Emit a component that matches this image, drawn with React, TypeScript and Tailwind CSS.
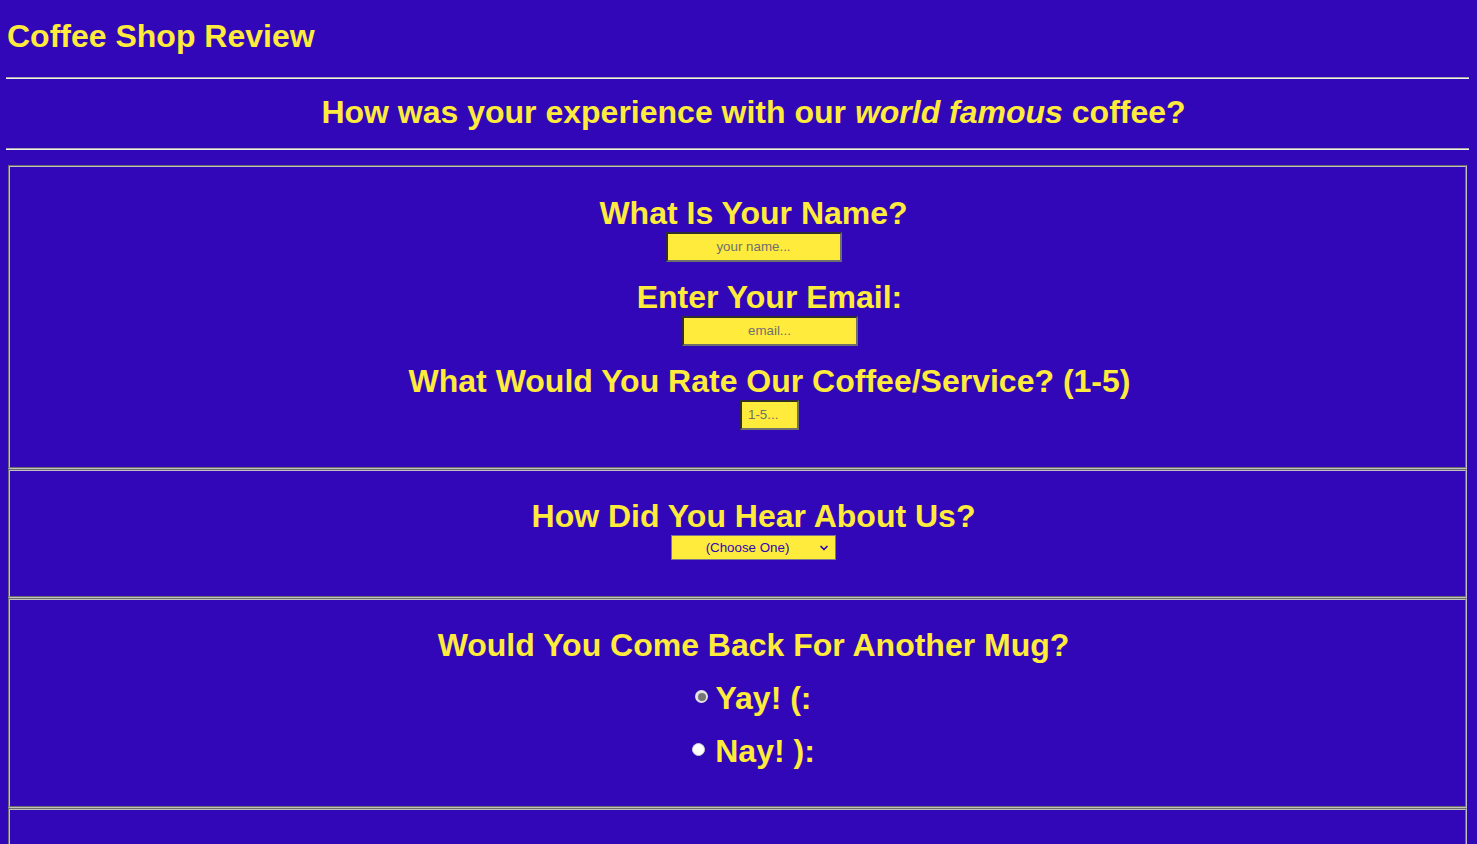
import { ChevronDown } from "lucide-react";

const heading = "text-[32px] leading-[37px] font-bold";
const field =
  "h-[30px] bg-[#ffeb3b] border-2 border-t-[#2e2e2e] border-l-[#2e2e2e] border-b-[#6e6e6e] border-r-[#6e6e6e] text-[13.33px] font-normal text-[#6f6f6f] flex items-center";

function Radio({ checked }: { checked?: boolean }) {
  if (checked) {
    return (
      <span className="w-[13px] h-[13px] rounded-full bg-[#e4e4e4] flex items-center justify-center -translate-y-[2px]">
        <span className="w-[8px] h-[8px] rounded-full bg-[#767676]" />
      </span>
    );
  }
  return (
    <span className="w-[13px] h-[13px] rounded-full bg-white border border-[#d0d0d0] -translate-y-[2px]" />
  );
}

export default function App() {
  return (
    <div className="min-h-screen bg-[#3107b8] pl-[6px] pr-[8px] font-['Liberation_Sans',Arial,sans-serif] text-[#ffeb3b]">
      <h1 className={`${heading} pt-[18px] pl-[1px]`}>Coffee Shop Review</h1>
      <div className="mt-[22px] h-[2px] border-t border-t-[#a8a8a8] border-b border-b-[#f0f0f0]" />
      <h2 className={`${heading} mt-[15px] text-center pl-[32px]`}>
        How was your experience with our <i>world famous</i> coffee?
      </h2>
      <div className="mt-[17px] h-[2px] border-t border-t-[#a8a8a8] border-b border-b-[#f0f0f0]" />

      <div className="mt-[15px] mx-[2px]">
        <section className="border-2 [border-style:groove] border-[#c0c0c0] pt-[28px] pb-[37px] pl-[32px] flex flex-col items-center">
          <h3 className={heading}>What Is Your Name?</h3>
          <div className={`${field} w-[176px] justify-center`}>your name...</div>
          <div className="mt-[17px] pl-[32px] flex flex-col items-center">
            <h3 className={heading}>Enter Your Email:</h3>
            <div className={`${field} w-[176px] justify-center`}>email...</div>
            <h3 className={`${heading} mt-[17px]`}>What Would You Rate Our Coffee/Service? (1-5)</h3>
            <div className={`${field} w-[59px] pl-[6px]`}>1-5...</div>
          </div>
        </section>

        <section className="border-2 [border-style:groove] border-[#c0c0c0] pt-[27px] pb-[36px] pl-[32px] flex flex-col items-center">
          <h3 className={heading}>How Did You Hear About Us?</h3>
          <div className="relative h-[25px] w-[165px] bg-[#ffeb3b] border border-[#7c7590] text-[13.33px] text-[#3107b8] flex items-center justify-center pr-[12px]">
            (Choose One)
            <ChevronDown className="absolute right-[5px] top-[6px] w-[12px] h-[12px]" strokeWidth={3.5} />
          </div>
        </section>

        <section className="border-2 [border-style:groove] border-[#c0c0c0] pt-[27px] pb-[36px] pl-[32px] flex flex-col items-center">
          <h3 className={heading}>Would You Come Back For Another Mug?</h3>
          <div className="mt-[16px] flex items-center gap-[7px]">
            <Radio checked />
            <span className={heading}>Yay! (:</span>
          </div>
          <div className="mt-[16px] flex items-center gap-[10px]">
            <Radio />
            <span className={heading}>Nay! ):</span>
          </div>
        </section>

        <section className="border-2 [border-style:groove] border-[#c0c0c0] h-[200px]" />
      </div>
    </div>
  );
}
